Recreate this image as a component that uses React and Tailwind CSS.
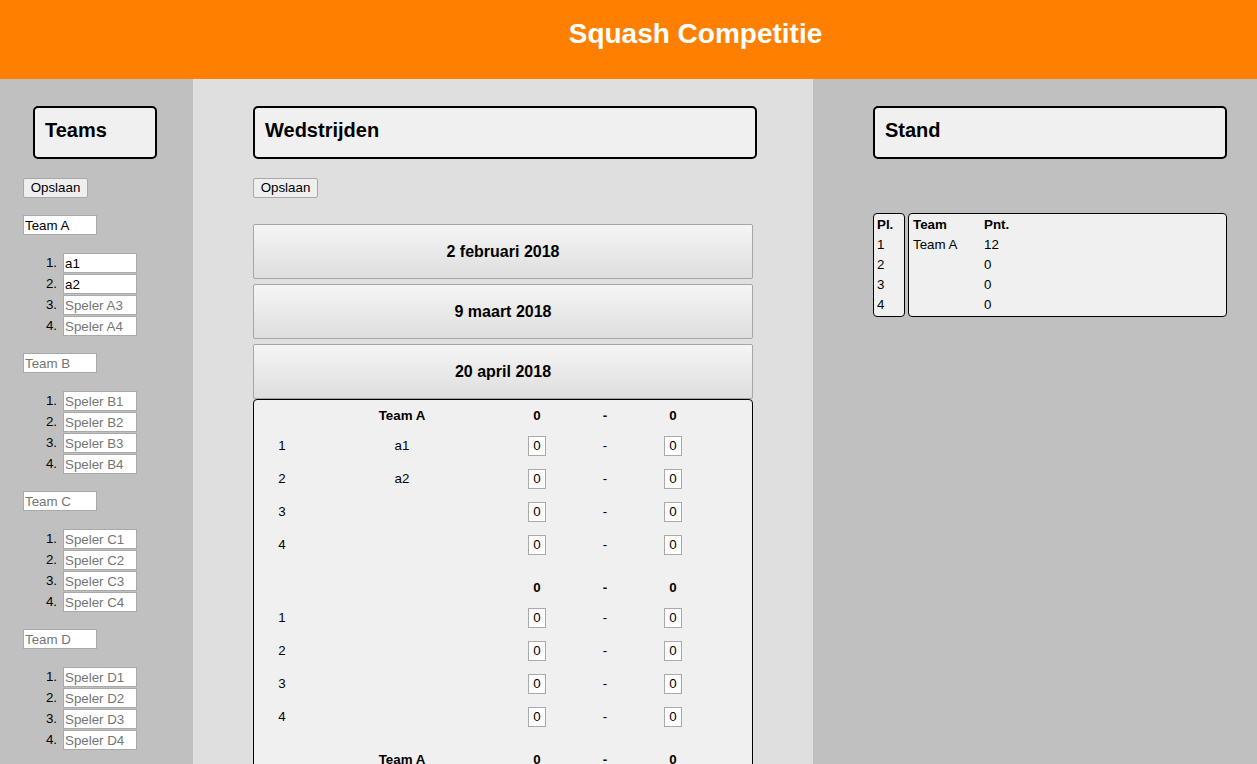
import React from "react";

const teams = [
  { name: "Team A", players: ["a1", "a2", "", ""], letter: "A" },
  { name: "", players: ["", "", "", ""], letter: "B" },
  { name: "", players: ["", "", "", ""], letter: "C" },
  { name: "", players: ["", "", "", ""], letter: "D" },
];

const blocks = [
  { team: "Team A", names: ["a1", "a2", "", ""] },
  { team: "", names: ["", "", "", ""] },
  { team: "Team A", names: ["a1", "a2", "", ""] },
];

const standing = [
  { pl: 1, team: "Team A", pnt: 12 },
  { pl: 2, team: "", pnt: 0 },
  { pl: 3, team: "", pnt: 0 },
  { pl: 4, team: "", pnt: 0 },
];

const TitleBox = ({ children, className = "" }) => (
  <div
    className={`h-[53px] rounded-[5px] border-2 border-black bg-[#f0f0f0] pl-[10px] pt-[11px] text-[20px] font-bold leading-[23px] text-black ${className}`}
  >
    {children}
  </div>
);

const SaveButton = () => (
  <button className="block h-[20px] w-[65px] rounded-[2px] border border-[#a8a8a8] bg-[#efefef] text-[13.33px] leading-[18px] text-black">
    Opslaan
  </button>
);

const ScoreInput = () => (
  <input
    defaultValue="0"
    className="h-[20px] w-[18px] border border-[#a9a9a9] bg-white text-center text-[13.33px] text-black outline-none"
  />
);

const App = () => {
  return (
    <div className="min-h-screen font-['Liberation_Sans',Arial,sans-serif] text-black">
      <header className="flex h-[79px] items-center justify-center bg-[#ff8000] pl-[134px]">
        <h1 className="pb-[12px] text-[28px] font-bold text-white">Squash Competitie</h1>
      </header>

      <div className="flex">
        {/* Teams */}
        <aside className="w-[193px] shrink-0 bg-[#c0c0c0] pl-[23px] pt-[27px] pb-[20px]">
          <TitleBox className="ml-[10px] w-[124px]">Teams</TitleBox>
          <div className="mt-[19px]">
            <SaveButton />
          </div>
          <div className="mt-[17px] flex flex-col gap-[17px]">
            {teams.map((t) => (
              <div key={t.letter} className="flex flex-col gap-[18px]">
                <input
                  defaultValue={t.name}
                  placeholder={`Team ${t.letter}`}
                  className="block h-[20px] w-[74px] border border-[#a9a9a9] bg-white px-[1px] text-[13.33px] text-black outline-none placeholder:text-[#757575]"
                />
                <ol className="flex flex-col gap-[1px]">
                  {t.players.map((p, i) => (
                    <li key={i} className="flex items-center">
                      <span className="w-[40px] pr-[6px] text-right text-[13.33px]">{i + 1}.</span>
                      <input
                        defaultValue={p}
                        placeholder={`Speler ${t.letter}${i + 1}`}
                        className="h-[20px] w-[74px] border border-[#a9a9a9] bg-white px-[1px] text-[13.33px] text-black outline-none placeholder:text-[#757575]"
                      />
                    </li>
                  ))}
                </ol>
              </div>
            ))}
          </div>
        </aside>

        {/* Wedstrijden */}
        <main className="w-[620px] shrink-0 bg-[#dfdfdf] pl-[60px] pt-[27px]">
          <TitleBox className="w-[504px]">Wedstrijden</TitleBox>
          <div className="mt-[19px]">
            <SaveButton />
          </div>
          <div className="mt-[26px] flex w-[500px] flex-col gap-[5px]">
            {["2 februari 2018", "9 maart 2018", "20 april 2018"].map((d) => (
              <button
                key={d}
                className="h-[55px] w-full rounded-[2px] border border-[#a6a6a6] bg-gradient-to-b from-[#f5f5f5] to-[#dedede] text-[16px] font-bold text-black"
              >
                {d}
              </button>
            ))}
          </div>
          <div className="w-[500px] rounded-t-[4px] border border-black bg-[#f0f0f0] text-[13.33px]">
            {blocks.map((b, bi) => (
              <div key={bi} className="pt-[5px] pb-[11px]">
                <div className="grid h-[22px] grid-cols-[56px_184px_86px_50px_86px] items-center text-center font-bold">
                  <span />
                  <span>{b.team}</span>
                  <span>0</span>
                  <span>-</span>
                  <span>0</span>
                </div>
                <div className="mt-[2px]">
                  {b.names.map((n, i) => (
                    <div
                      key={i}
                      className="grid h-[33px] grid-cols-[56px_184px_86px_50px_86px] items-center text-center"
                    >
                      <span>{i + 1}</span>
                      <span>{n}</span>
                      <span className="flex justify-center">
                        <ScoreInput />
                      </span>
                      <span>-</span>
                      <span className="flex justify-center">
                        <ScoreInput />
                      </span>
                    </div>
                  ))}
                </div>
              </div>
            ))}
          </div>
        </main>

        {/* Stand */}
        <aside className="flex-1 bg-[#c0c0c0] pl-[60px] pr-[30px] pt-[27px]">
          <TitleBox>Stand</TitleBox>
          <div className="mt-[54px] flex gap-[3px] text-[13.33px] leading-[20px]">
            <div className="w-[32px] rounded-[4px] border border-black bg-[#f0f0f0] pl-[3px] pt-[1px] pb-[1px]">
              <div className="font-bold">Pl.</div>
              {standing.map((s) => (
                <div key={s.pl}>{s.pl}</div>
              ))}
            </div>
            <div className="flex-1 rounded-[4px] border border-black bg-[#f0f0f0] pl-[4px] pt-[1px] pb-[1px]">
              <div className="grid grid-cols-[71px_auto] font-bold">
                <span>Team</span>
                <span>Pnt.</span>
              </div>
              {standing.map((s) => (
                <div key={s.pl} className="grid h-[20px] grid-cols-[71px_auto]">
                  <span>{s.team}</span>
                  <span>{s.pnt}</span>
                </div>
              ))}
            </div>
          </div>
        </aside>
      </div>
    </div>
  );
};

export default App;
